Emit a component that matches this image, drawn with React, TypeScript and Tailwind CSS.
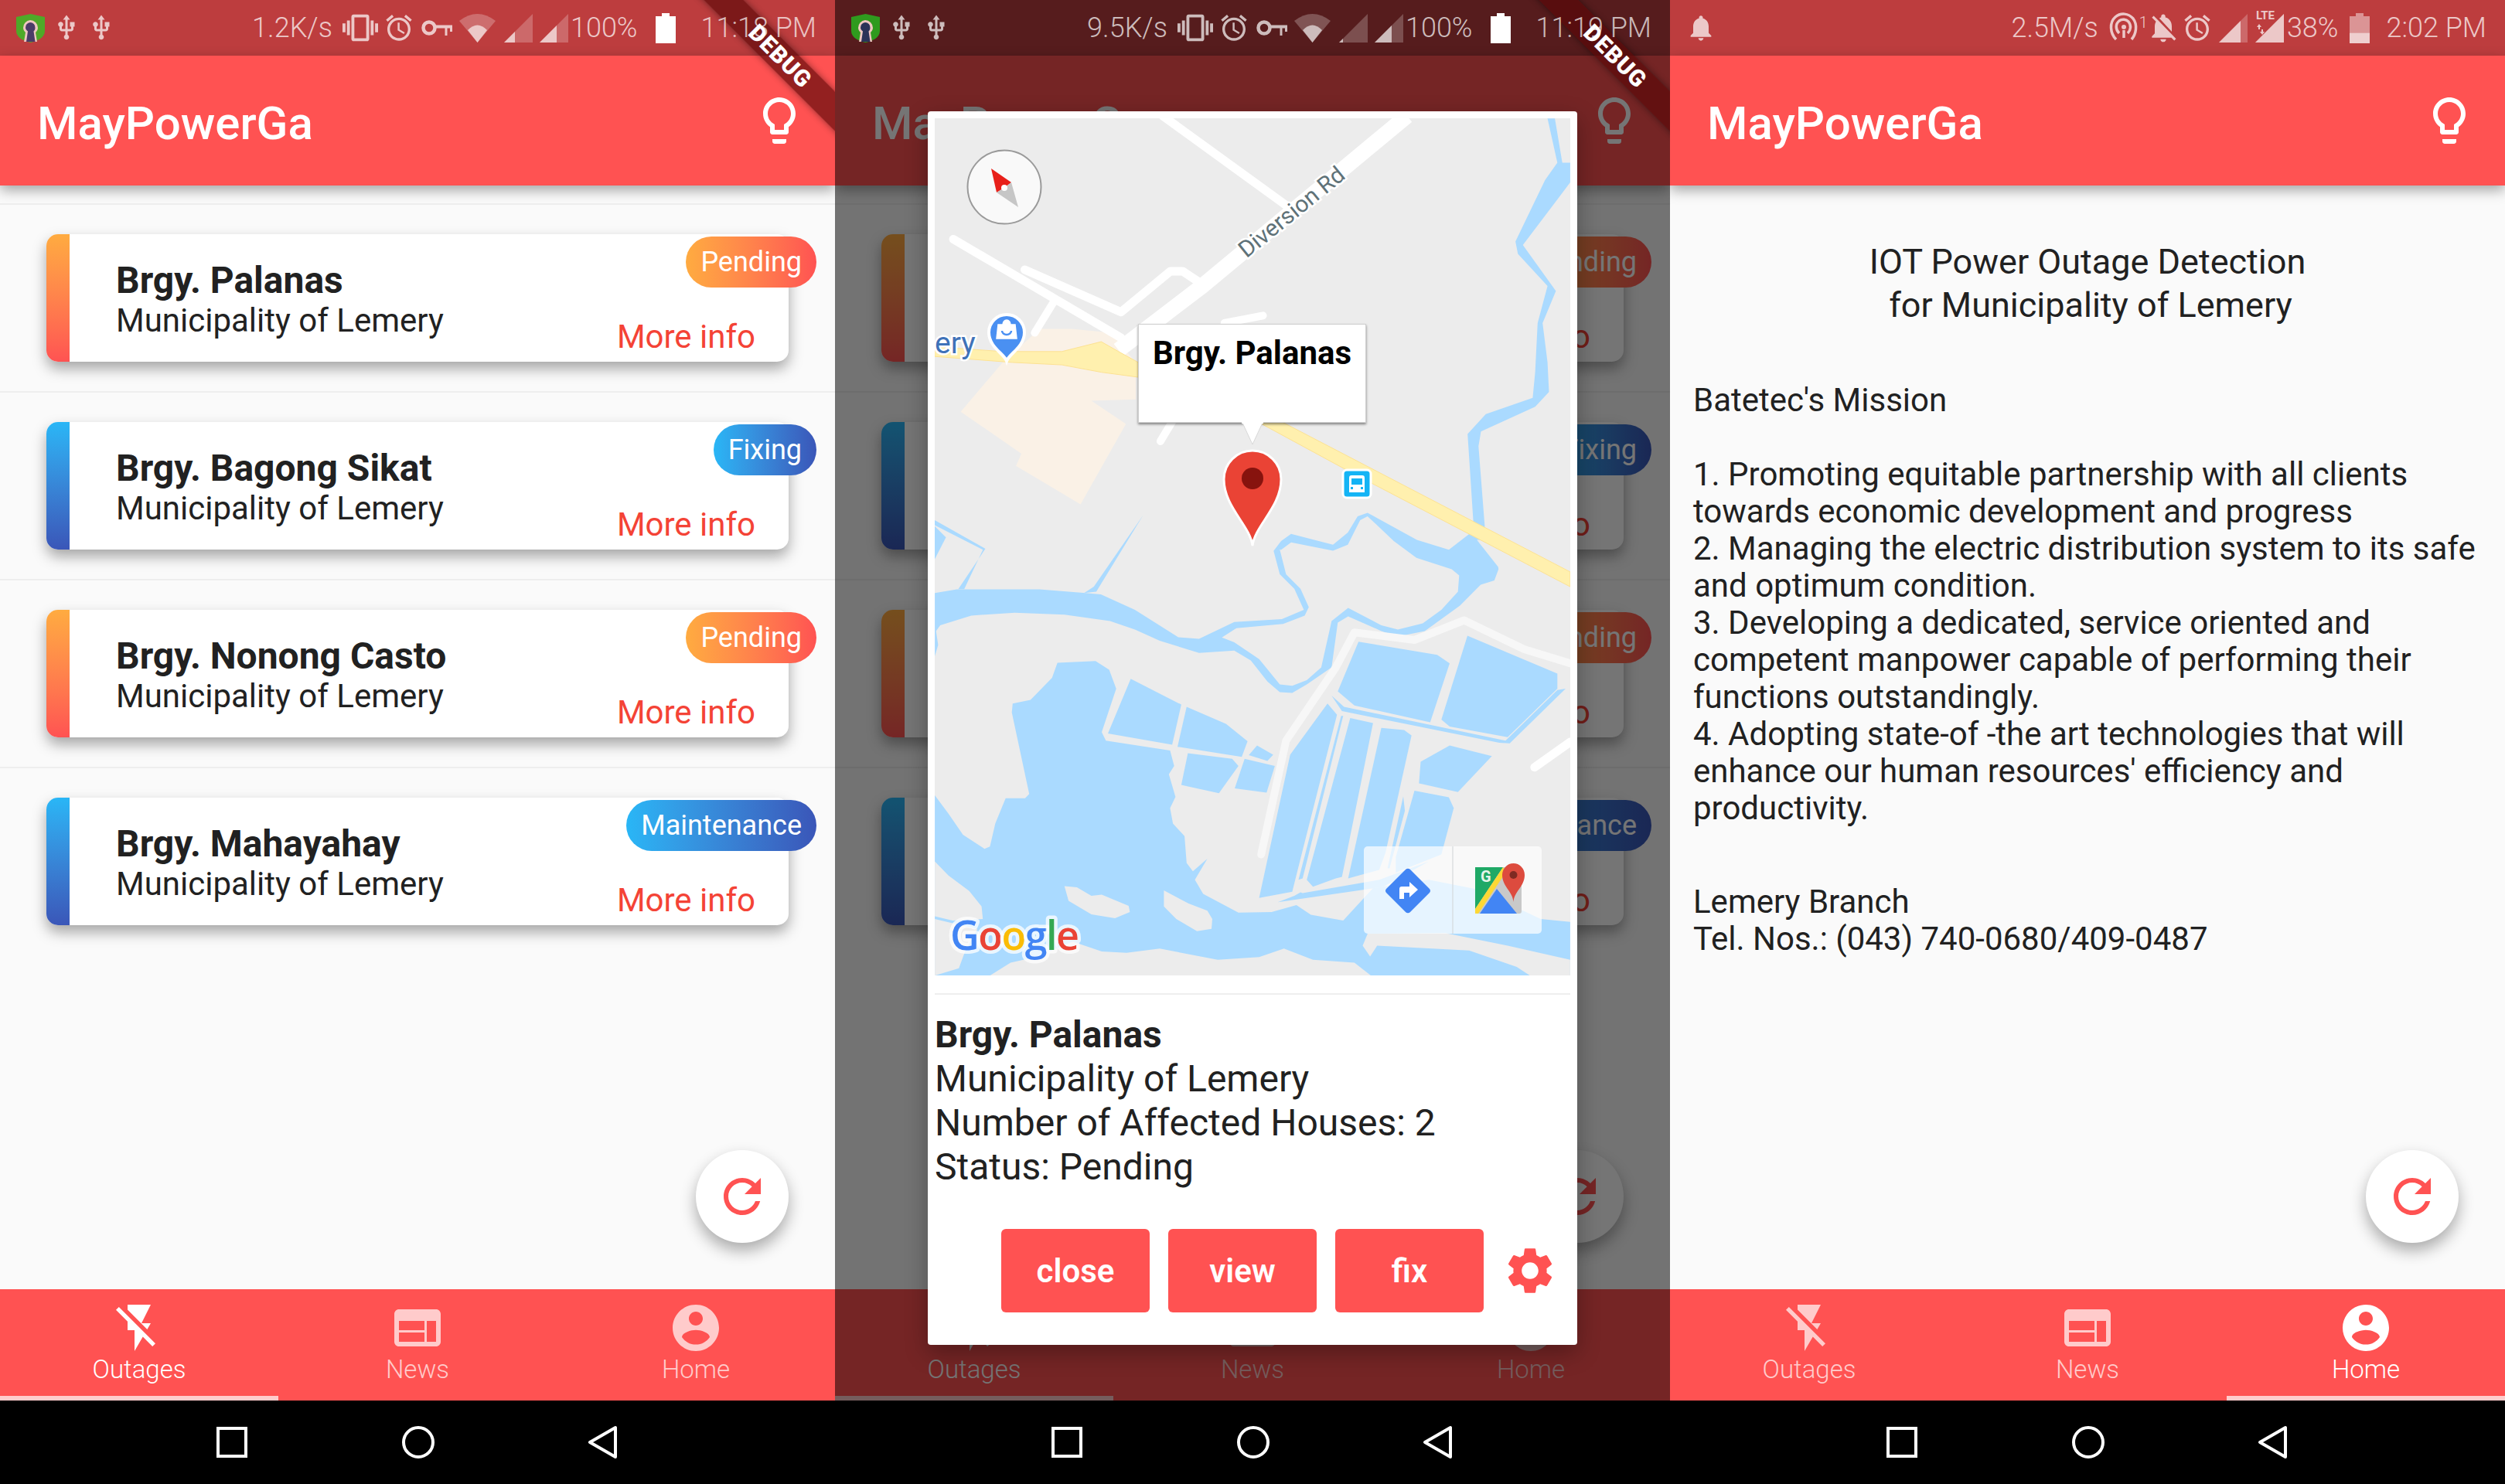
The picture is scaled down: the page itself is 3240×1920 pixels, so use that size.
import React from "react";

const z9 = (s: string) =>
  s.trim().split(/\s+/).map((p) => {
    const [x, y] = p.split(",").map(Number);
    return `${(1080 + x / 1.568).toFixed(1)},${(150 + y / 1.568).toFixed(1)}`;
  }).join(" ");
const z10 = (s: string) =>
  s.trim().split(/\s+/).map((p) => {
    const [x, y] = p.split(",").map(Number);
    return `${(1200 + x / 1.8667).toFixed(1)},${(700 + y / 2.75).toFixed(1)}`;
  }).join(" ");

const P = {
  flashOff: "M3.27 3L2 4.27l5 5V13h3v9l3.58-6.14L17.73 20 19 18.73 3.27 3zM17 10h-4l4-8H7v2.18l8.46 8.46L17 10z",
  web: "M20 4H4c-1.1 0-1.99.9-1.99 2L2 18c0 1.1.9 2 2 2h16c1.1 0 2-.9 2-2V6c0-1.1-.9-2-2-2zm-5 14H4v-4h11v4zm0-5H4V9h11v4zm5 5h-4V9h4v9z",
  account: "M12 2C6.48 2 2 6.48 2 12s4.48 10 10 10 10-4.48 10-10S17.52 2 12 2zm0 3c1.66 0 3 1.34 3 3s-1.34 3-3 3-3-1.34-3-3 1.34-3 3-3zm0 14.2c-2.5 0-4.71-1.28-6-3.22.03-1.99 4-3.08 6-3.08 1.99 0 5.97 1.09 6 3.08-1.29 1.94-3.5 3.22-6 3.22z",
  bulb: "M9 21c0 .55.45 1 1 1h4c.55 0 1-.45 1-1v-1H9v1zm3-19C8.14 2 5 5.14 5 9c0 2.38 1.19 4.47 3 5.74V17c0 .55.45 1 1 1h6c.55 0 1-.45 1-1v-2.26c1.81-1.27 3-3.36 3-5.74 0-3.86-3.14-7-7-7zm2.85 11.1l-.85.6V16h-4v-2.3l-.85-.6C7.8 12.16 7 10.63 7 9c0-2.76 2.24-5 5-5s5 2.24 5 5c0 1.63-.8 3.16-2.15 4.1z",
  refresh: "M17.65 6.35C16.2 4.9 14.21 4 12 4c-4.42 0-7.99 3.58-7.99 8s3.57 8 7.99 8c3.73 0 6.84-2.55 7.73-6h-2.08c-.82 2.33-3.04 4-5.65 4-3.31 0-6-2.69-6-6s2.69-6 6-6c1.66 0 3.14.69 4.22 1.78L13 11h7V4l-2.35 2.35z",
  usb: "M15 7v4h1v2h-3V5h2l-3-4-3 4h2v8H8v-2.07c.7-.37 1.2-1.08 1.2-1.93 0-1.21-.99-2.2-2.2-2.2-1.21 0-2.2.99-2.2 2.2 0 .85.5 1.56 1.2 1.93V13c0 1.11.89 2 2 2h3v3.05c-.71.37-1.2 1.1-1.2 1.95 0 1.22.99 2.2 2.2 2.2 1.21 0 2.2-.98 2.2-2.2 0-.85-.49-1.58-1.2-1.95V15h3c1.11 0 2-.89 2-2v-2h1V7h-4z",
  alarm: "M22 5.72l-4.6-3.86-1.29 1.53 4.6 3.86L22 5.72zM7.88 3.39L6.6 1.86 2 5.71l1.29 1.53 4.59-3.85zM12.5 8H11v6l4.75 2.85.75-1.23-4-2.37V8zM12 4c-4.97 0-9 4.03-9 9s4.03 9 9 9c4.97 0 9-4.03 9-9s-4.03-9-9-9zm0 16c-3.87 0-7-3.13-7-7s3.13-7 7-7 7 3.13 7 7-3.13 7-7 7z",
  vibrate: "M0 15h2V9H0v6zm3 2h2V7H3v10zm19-8v6h2V9h-2zm-3 8h2V7h-2v10zM16.5 3h-9C6.67 3 6 3.67 6 4.5v15c0 .83.67 1.5 1.5 1.5h9c.83 0 1.5-.67 1.5-1.5v-15c0-.83-.67-1.5-1.5-1.5zM16 19H8V5h8v14z",
  bell: "M12 22c1.1 0 2-.9 2-2h-4c0 1.1.89 2 2 2zm6-6v-5c0-3.07-1.64-5.64-4.5-6.32V4c0-.83-.67-1.5-1.5-1.5s-1.5.67-1.5 1.5v.68C7.63 5.36 6 7.92 6 11v5l-2 2v1h16v-1l-2-2z",
  bellOff: "M20 18.69L7.84 6.14 5.27 3.49 4 4.76l2.8 2.8v.01c-.52.99-.8 2.16-.8 3.42v5l-2 2v1h13.73l2 2L21 19.72l-1-1.03zM12 22c1.11 0 2-.89 2-2h-4c0 1.11.89 2 2 2zm6-7.32V11c0-3.08-1.64-5.64-4.5-6.32V4c0-.83-.67-1.5-1.5-1.5s-1.5.67-1.5 1.5v.68c-.15.03-.29.08-.42.12-.1.03-.2.07-.3.11h-.01c-.2.08-.4.17-.59.27-.01 0-.01 0-.02.01L18 14.68z",
  gear: "M19.14 12.94c.04-.3.06-.61.06-.94 0-.32-.02-.64-.07-.94l2.03-1.58c.18-.14.23-.41.12-.61l-1.92-3.32c-.12-.22-.37-.29-.59-.22l-2.39.96c-.5-.38-1.03-.7-1.62-.94l-.36-2.54c-.04-.24-.24-.41-.48-.41h-3.84c-.24 0-.43.17-.47.41l-.36 2.54c-.59.24-1.13.57-1.62.94l-2.39-.96c-.22-.08-.47 0-.59.22L2.74 8.87c-.12.21-.08.47.12.61l2.03 1.58c-.05.3-.09.63-.09.94s.02.64.07.94l-2.03 1.58c-.18.14-.23.41-.12.61l1.92 3.32c.12.22.37.29.59.22l2.39-.96c.5.38 1.03.7 1.62.94l.36 2.54c.05.24.24.41.48.41h3.84c.24 0 .44-.17.47-.41l.36-2.54c.59-.24 1.13-.56 1.62-.94l2.39.96c.22.08.47 0 .59-.22l1.92-3.32c.12-.22.07-.47-.12-.61l-2.01-1.58zM12 15.6c-1.98 0-3.6-1.62-3.6-3.6s1.62-3.6 3.6-3.6 3.6 1.62 3.6 3.6-1.62 3.6-3.6 3.6z",
};

function Mi({ d, size, className = "" }: { d: string; size: number; className?: string }) {
  return (
    <svg width={size} height={size} viewBox="0 0 24 24" fill="currentColor" className={`shrink-0 ${className}`}>
      <path d={d} />
    </svg>
  );
}

function Shield({ dark }: { dark?: boolean }) {
  return (
    <svg width="37" height="37" viewBox="0 0 37 37" className="shrink-0">
      <path d="M18.500 0L37 4V22C37 31 27 35 18.500 37C10 35 0 31 0 22V4Z" fill={dark ? "#2f9a1e" : "#4fa928"} />
      <path d="M18 8a10 10 0 0 1 10 10c0 3-2 5-3 6l2 12H10l2-12c-1-1-3-3-3-6a10 10 0 0 1 9-10z" fill="#eec7c0" />
      <path d="M18 11a6.500 6.500 0 0 1 6.500 7c0 2-1 3.500-2 4.500l2 13.500H13l2-13.500c-1-1-3-2.500-3-4.500a6.500 6.500 0 0 1 6-7z" fill={dark ? "#2b3358" : "#4b3c68"} />
    </svg>
  );
}

function Key() {
  return (
    <svg width="40" height="20" viewBox="0 0 40 20" className="shrink-0" fill="none" stroke="currentColor">
      <circle cx="10" cy="10" r="7.500" strokeWidth="4.500" />
      <path d="M17 8.500H40" strokeWidth="4" />
      <path d="M32 9V20M38.500 9V15" strokeWidth="3" />
    </svg>
  );
}

function Wifi() {
  return (
    <svg width="47" height="37" viewBox="0 0 47 37" className="shrink-0" fill="currentColor">
      <path d="M0 9Q23.500 -9 47 9L23.500 37Z" opacity="0.35" />
      <path d="M11 21Q23.500 8 36 21L23.500 37Z" />
    </svg>
  );
}

function Signal({ w }: { w: number }) {
  return (
    <svg width="37" height="37" viewBox="0 0 37 37" className="shrink-0" fill="currentColor">
      <path d="M37 0V37H0Z" opacity="0.32" />
      <path d={`M0 37L${w} ${37 - w}V37Z`} />
    </svg>
  );
}

function Battery({ level }: { level: number }) {
  return (
    <svg width="26" height="39" viewBox="0 0 26 39" className="shrink-0">
      <path d="M8 0H18V4H26V39H0V4H8Z" fill={level < 1 ? "rgba(255,255,255,0.45)" : "#fff"} />
      {level < 1 && <rect x="0" y={39 - 35 * level} width="26" height={35 * level} fill="rgba(255,255,255,0.55)" />}
    </svg>
  );
}

function Hotspot() {
  return (
    <svg width="40" height="42" viewBox="0 0 40 42" fill="none" stroke="currentColor" strokeWidth="3.500" className="shrink-0">
      <path d="M10 36C2 28 1 14 9 7C16 1 26 2 32 9C38 17 36 29 30 36" />
      <path d="M14 28C9 23 9 16 14 12C18 9 23 10 26 13C30 18 29 24 25 28" />
      <circle cx="20" cy="20" r="3" fill="currentColor" stroke="none" />
      <path d="M20 24V34" />
    </svg>
  );
}

function StatusBar({ screen }: { screen: 1 | 2 | 3 }) {
  const dim = screen === 2;
  const bar = dim
    ? "relative flex h-[72px] shrink-0 items-center bg-[#561c1d] pl-[21px] pr-[24px] text-[#cdbcbc]"
    : "relative flex h-[72px] shrink-0 items-center bg-[#bd3d3e] pl-[21px] pr-[24px] text-[#ecc8c8]";
  if (screen === 3) {
    return (
      <div className={bar}>
        <Mi d={P.bell} size={40} className="-ml-[1px]" />
        <span className="ml-auto text-[36px] font-light leading-none">2.5M/s</span>
        <div className="ml-[13px]"><Hotspot /></div>
        <span className="mb-[14px] text-[20px] font-light leading-none">1</span>
        <Mi d={P.bellOff} size={44} className="-ml-[2px]" />
        <Mi d={P.alarm} size={40} className="ml-[2px]" />
        <div className="ml-[8px]"><Signal w={28} /></div>
        <div className="relative ml-[10px]">
          <Signal w={37} />
          <span className="absolute -top-[5px] left-[1px] text-[15px] font-bold leading-none">LTE</span>
          <svg width="10" height="14" viewBox="0 0 10 14" fill="currentColor" className="absolute left-[2px] top-[13px]">
            <path d="M3 0L6 4H4V7H2V4H0ZM7 14L4 10H6V7H8V10H10Z" />
          </svg>
        </div>
        <span className="ml-[4px] text-[36px] font-light leading-none">38%</span>
        <div className="ml-[15px]"><Battery level={0.38} /></div>
        <span className="ml-[21px] text-[36px] font-light leading-none">2:02 PM</span>
      </div>
    );
  }
  return (
    <div className={bar}>
      <Shield dark={dim} />
      <Mi d={P.usb} size={36} className="ml-[10px]" />
      <Mi d={P.usb} size={36} className="ml-[9px]" />
      <span className="ml-auto text-[36px] font-light leading-none">{dim ? "9.5K/s" : "1.2K/s"}</span>
      <Mi d={P.vibrate} size={46} className="ml-[13px]" />
      <Mi d={P.alarm} size={40} className="ml-[7px]" />
      <div className="ml-[9px]"><Key /></div>
      <div className="ml-[9px]"><Wifi /></div>
      <div className="ml-[11px]"><Signal w={dim ? 5 : 14} /></div>
      <div className="ml-[9px]"><Signal w={22} /></div>
      <span className="ml-[3px] text-[36px] font-light leading-none">100%</span>
      <div className="ml-[24px]"><Battery level={1} /></div>
      <span className="relative z-50 ml-[32px] text-[36px] font-light leading-none text-white/70">{dim ? "11:19 PM" : "11:18 PM"}</span>
    </div>
  );
}

function AppBar() {
  return (
    <header className="relative z-10 flex h-[168px] shrink-0 items-center justify-between bg-[#ff5252] pl-[48px] pr-[36px] text-white shadow-[0_6px_16px_rgba(0,0,0,0.35)]">
      <h1 className="pt-[7px] text-[60px] font-medium leading-none">MayPowerGa</h1>
      <Mi d={P.bulb} size={72} />
    </header>
  );
}

function Debug() {
  return (
    <div className="absolute left-[809px] top-[55px] z-40 flex h-[36px] w-[400px] rotate-45 items-center justify-center bg-[#590606]/65 text-[30px] font-black leading-none tracking-[1px] text-white shadow-[0_0_10px_rgba(0,0,0,0.45)]">
      DEBUG
    </div>
  );
}

const items = [
  { title: "Brgy. Palanas", status: "Pending", warm: true },
  { title: "Brgy. Bagong Sikat", status: "Fixing", warm: false },
  { title: "Brgy. Nonong Casto", status: "Pending", warm: true },
  { title: "Brgy. Mahayahay", status: "Maintenance", warm: false },
];

function OutageList() {
  return (
    <div className="pt-[23px]">
      <div className="h-[2px] bg-[#eeeeee]" />
      {items.map((it) => (
        <div key={it.title} className="border-b-2 border-[#eeeeee] px-[60px] py-[38px] last:border-b-0">
          <div className="relative flex h-[165px] rounded-[15px] bg-white shadow-[0_9px_18px_rgba(0,0,0,0.34)]">
            <div className={`w-[30px] shrink-0 rounded-l-[15px] bg-gradient-to-b ${it.warm ? "from-[#ffab40] to-[#ff5252]" : "from-[#29b6f6] to-[#3a56b8]"}`} />
            <div className="flex flex-col pl-[60px] pt-[32px]">
              <div className="text-[48px] font-bold leading-[56px] text-[#212121]">{it.title}</div>
              <div className="text-[42px] leading-[48px] text-[#212121]">Municipality of Lemery</div>
            </div>
            <div className="absolute bottom-[8px] right-[43px] text-[42px] leading-[48px] text-[#f44336]">More info</div>
            <div className={`absolute -right-[36px] top-[3px] flex h-[66px] items-center rounded-[33px] bg-gradient-to-r px-[19px] text-[36px] leading-none text-white ${it.warm ? "from-[#ffab40] to-[#ff5252]" : "from-[#29b6f6] to-[#3a56b8]"}`}>
              {it.status}
            </div>
          </div>
        </div>
      ))}
    </div>
  );
}

function Fab() {
  return (
    <div className="absolute left-[900px] top-[1248px] flex h-[120px] w-[120px] items-center justify-center rounded-full bg-white text-[#ff5252] shadow-[0_10px_20px_rgba(0,0,0,0.32)]">
      <Mi d={P.refresh} size={72} />
    </div>
  );
}

function Tabs({ active }: { active: number }) {
  const tabs = [
    { label: "Outages", d: P.flashOff },
    { label: "News", d: P.web },
    { label: "Home", d: P.account },
  ];
  return (
    <nav className="flex h-[144px] shrink-0 bg-[#ff5252]">
      {tabs.map((t, i) => (
        <div
          key={t.label}
          className={`flex w-[360px] flex-col items-center border-b-[6px] pt-[14px] ${i === active ? "border-[#ffcbcb] text-white" : "border-transparent text-[#ffcbcb]"}`}
        >
          <Mi d={t.d} size={72} />
          <span className="-mt-[2px] text-[33px] font-light leading-[40px]">{t.label}</span>
        </div>
      ))}
    </nav>
  );
}

function SoftKeys() {
  return (
    <div className="flex h-[108px] shrink-0 items-center justify-center gap-[200px] bg-black">
      <div className="h-[40px] w-[40px] border-[4px] border-white" />
      <div className="h-[42px] w-[42px] rounded-full border-[4px] border-white" />
      <svg width="40" height="44" viewBox="0 0 40 44" fill="none" stroke="#fff" strokeWidth="4" strokeLinejoin="round" className="-ml-[2px]">
        <path d="M36 3V41L3 22Z" />
      </svg>
    </div>
  );
}

function MapArt() {
  const land = "#ececec";
  const water = "#aadaff";
  return (
    <svg width="822" height="1109" viewBox="1209 153 822 1109" className="block">
      <rect x="1209" y="153" width="822" height="1109" fill={land} />
      {/* beige area */}
      <polygon fill="#faf1e6" points={z9("255,600 340,500 415,432 480,432 560,440 610,500 610,575 520,578 590,625 498,788 367,710 378,685")} />
      {/* river */}
      <polygon fill={water} points={z10("17,185 70,172 270,172 375,184 418,190 500,245 605,342 655,348 740,288 855,278 908,245 885,170 850,118 835,35 853,0") + " " + z9("925,848 1010,870 1040,845 1060,812 1080,805 1180,860 1245,880 1290,845 1345,915") + " " + z10("1378,100 1368,140 1335,155 1285,230 1200,320 1135,340 1095,320 1015,268 990,290 975,450 915,510 880,540 850,538 820,500 780,425 740,390 655,398 560,355 500,315 440,285 330,262 210,255 105,265 30,300 20,320 25,370 17,410")} />
      <polygon fill={land} points={z10("850,30 865,118 900,170 920,235 910,265 858,295 745,310 710,343 740,360 800,420 850,510 880,515 915,495 950,450 975,285 1015,238 1095,300 1135,315 1195,293 1240,245 1280,180 1283,122 1265,100 1180,60 1125,0") + " " + z9("1080,812 1065,820 1040,870 1010,882 925,865 905,880 900,880")} />
      {/* thin river on the right */}
      <polygon fill={water} points={z9("1445,5 1465,95 1440,130 1380,255 1385,280 1445,345 1425,420 1420,520 1415,572 1320,605 1283,645 1295,830 1290,860 1320,860 1305,670 1310,640 1420,590 1448,560 1445,500 1435,420 1462,355 1395,262 1491,135 1491,95 1475,95 1460,5")} />
      {/* thin channels on the left */}
      <polygon fill={water} points={z9("202,820 305,878 250,960 262,960 300,880 202,830")} />
      <polygon fill={water} points={z9("202,832 225,855 202,900")} />
      <polygon fill={water} points={z9("625,810 525,955 505,968 530,965")} />
      {/* lake and sea */}
      <polygon fill={water} points={z10("313,433 405,427 438,458 455,525 420,680 430,710 585,745 595,800 582,830 598,910 585,950 592,1005 620,1050 625,1145 640,1175 675,1130 645,1205 665,1255 750,1322 830,1320 890,1295 925,1330 1003,1350 1075,1235 1210,1205 1330,1240 1480,1345 1551,1355 1551,1546 17,1546 17,905 50,970 85,1045 137,1095 150,1087 163,1005 188,915 235,915 245,900 203,610 205,578 248,565 300,487")} />
      {/* land over the sea */}
      <polygon fill={land} points={z10("150,1546 200,1500 260,1480 350,1425 420,1460 480,1465 560,1450 700,1490 800,1480 860,1450 930,1490 1030,1500 1070,1546")} />
      <polygon fill={land} points={z10("1050,1440 1062,1397 1250,1395 1400,1440 1551,1490 1551,1546 1454,1546 1422,1515 1307,1457 1085,1440 1068,1478")} />
      <polygon fill={land} points={z10("17,1140 50,1190 100,1245 130,1300 133,1345 60,1350 17,1335")} />
      <polygon fill={land} points={z10("17,1345 60,1360 120,1380 90,1460 75,1520 17,1546")} />
      <polygon fill={land} points={z10("330,1228 360,1232 395,1262 420,1258 485,1298 488,1320 452,1342 395,1328 340,1280")} />
      <polygon fill={land} points={z10("570,1243 630,1290 675,1315 687,1345 685,1380 650,1388 600,1345 570,1300")} />
      {/* ponds */}
      {[
        "435,685 490,490 612,582 590,725",
        "625,590 720,650 772,712 758,768 603,732",
        "795,727 834,760 820,782 775,762",
        "628,755 735,775 750,800 703,897 612,868",
        "765,775 838,800 818,895 741,880",
        "1040,358 1230,405 1260,435 1213,645 1030,585 990,535",
        "1303,337 1520,472 1520,525 1400,698 1260,660 1240,635",
        "965,578 988,618 900,1130 880,1248 800,1270 875,760",
        "1020,630 1075,648 1000,1195 985,1200 930,1230 915,1205",
        "1095,665 1150,672 1168,692 1105,1110 1090,1170 1015,1200",
        "1260,727 1362,765 1280,893 1186,862 1190,785",
        "1175,888 1258,912 1270,950 1240,1115 1130,1180 1130,1125",
        "975,550 1005,590 1395,710 1520,530 1540,525 1405,720 1380,718 1000,605",
        "998,622 1003,622 905,1200 895,1205",
        "1148,908 1152,960 1115,1165 1110,1165",
        "845,1285 885,1262 900,1250 905,1253 1090,1205 1210,1140 1100,1230",
      ].map((p) => (
        <polygon key={p} fill={water} points={z10(p)} />
      ))}
      {/* pale dyke road */}
      <polyline fill="none" stroke="#f7f7f7" strokeWidth="10" strokeLinecap="round" strokeLinejoin="round" points={z10("805,1115 865,710 985,450 1030,325 1175,352 1295,282 1440,385 1551,435")} />
      {/* white roads */}
      <g fill="none" stroke="#fff" strokeLinecap="round" strokeLinejoin="round">
        <polyline strokeWidth="11" points={z9("665,0 920,185")} />
        <polyline strokeWidth="20" strokeLinecap="butt" points={z9("1160,0 745,345 575,475")} />
        <polyline strokeWidth="11" points={z9("240,250 580,450")} />
        <polyline strokeWidth="11" points={z9("385,312 580,398 680,315 705,315 735,335")} />
        <polyline strokeWidth="10" points={z9("445,375 405,440")} />
        <polyline strokeWidth="10" points={z9("660,660 690,610")} />
        <polyline strokeWidth="10" points={z9("790,420 868,405")} />
        <polyline strokeWidth="11" points={z10("1465,805 1551,715")} />
      </g>
      {/* yellow roads */}
      <polygon fill="#fff0ae" stroke="#fde293" strokeWidth="1" points={z9("202,468 340,478 460,478 540,458 575,478 615,500 615,530 540,520 460,505 360,500 202,488")} />
      <polygon fill="#fff0ae" stroke="#fde293" strokeWidth="1" points={z9("860,622 905,620 1491,925 1491,955 1050,725")} />
      {/* road label */}
      <text x="0" y="0" transform="translate(1672 276) rotate(-39)" textAnchor="middle" fontFamily="Roboto" fontSize="30" fill="#5f7278" stroke="#fff" strokeWidth="5" paintOrder="stroke" dominantBaseline="middle">Diversion Rd</text>
      {/* place label + blue marker */}
      <text x="1209" y="457" fontFamily="Roboto" fontSize="39" fill="#3f72b8" stroke="#fff" strokeWidth="5" paintOrder="stroke">ery</text>
      <path d="M1302 467c-3-9-23-18-23-37a23 23 0 0 1 46 0c0 19-20 28-23 37z" fill="#4a90f2" stroke="#fff" strokeWidth="4" />
      <path d="M1291 420h22l2 18h-26z M1297 420a5 6 0 0 1 10 0" fill="#fff" stroke="#fff" strokeWidth="1.500" />
      <path d="M1296 428a6 5 0 0 0 12 0" fill="none" stroke="#4a90f2" strokeWidth="2.500" />
      {/* bus */}
      <rect x="1737" y="608" width="36" height="36" rx="5" fill="#14b4f5" stroke="#fff" strokeWidth="3" />
      <path d="M1748 615h14a3 3 0 0 1 3 3v19h-20v-19a3 3 0 0 1 3-3zM1748 619v8h14v-8z" fill="#fff" fillRule="evenodd" />
      <rect x="1747" y="630" width="3" height="3" fill="#14b4f5" />
      <rect x="1760" y="630" width="3" height="3" fill="#14b4f5" />
      {/* red pin */}
      <path d="M1620 706c-3-26-37-50-37-86a37 37 0 0 1 74 0c0 36-34 60-37 86z" fill="#ea4335" stroke="#fff" strokeWidth="3" />
      <circle cx="1620" cy="619" r="14" fill="#87130e" />
      {/* compass */}
      <circle cx="1299" cy="242" r="47.500" fill="#f9f9f9" stroke="#9a9a9a" strokeWidth="2" />
      <polygon points="1282,218 1308,236 1299,243 1289,249" fill="#e8201a" />
      <polygon points="1299,243 1308,236 1317,268 1289,249" fill="#c6c6c6" />
      <circle cx="1299" cy="243" r="4" fill="#fff" />
      {/* google */}
      <text x="1229" y="1229" fontFamily="Open Sans" fontWeight="600" fontSize="52" letterSpacing="-1.500" stroke="#fff" strokeOpacity="0.75" strokeWidth="9" paintOrder="stroke" strokeLinejoin="round">
        <tspan fill="#4285f4">G</tspan>
        <tspan fill="#ea4335">o</tspan>
        <tspan fill="#fbbc05">o</tspan>
        <tspan fill="#4285f4">g</tspan>
        <tspan fill="#34a853">l</tspan>
        <tspan fill="#ea4335">e</tspan>
      </text>
      {/* map toolbar */}
      <rect x="1764" y="1095" width="230" height="113" rx="5" fill="#fff" fillOpacity="0.7" />
      <rect x="1878.500" y="1095" width="1" height="113" fill="#cfd3d6" />
      <path d="M1818 1125a4 4 0 0 1 6 0l25 25a4 4 0 0 1 0 5l-25 25a4 4 0 0 1-6 0l-25-25a4 4 0 0 1 0-5z" fill="#4285f4" />
      <path d="M1810 1163v-13a3 3 0 0 1 3-3h10v-6l11 10-11 10v-6h-7v8z" fill="#fff" />
      <rect x="1908" y="1122" width="60" height="60" rx="3" fill="#c9c9c9" />
      <polygon points="1908,1122 1944,1122 1908,1176" fill="#1fa966" />
      <polygon points="1908,1176 1944,1122 1948,1128 1912,1182 1908,1182" fill="#fdd835" />
      <polygon points="1914,1182 1936,1150 1962,1182" fill="#4285f4" />
      <text x="1915" y="1141" fontFamily="Roboto" fontWeight="700" fontSize="20" fill="#e6f4ea">G</text>
      <path d="M1957.500 1167c-1-14-14.500-20-14.500-35a14.500 15 0 0 1 29 0c0 15-13.500 21-14.500 35z" fill="#dd4b3e" />
      <circle cx="1957.500" cy="1132" r="5" fill="#7f2a22" />
    </svg>
  );
}

function Dialog() {
  return (
    <section className="absolute left-[120px] top-[144px] z-30 flex h-[1596px] w-[840px] flex-col rounded-[4px] bg-white px-[9px] pt-[9px] shadow-[0_10px_30px_rgba(0,0,0,0.3)]">
      <div className="relative">
        <MapArt />
        <div className="absolute left-[263px] top-[266px] h-[128px] w-[295px] border border-[#cfcfcf] bg-white pl-[18px] pt-[11px] shadow-[0_2px_3px_rgba(0,0,0,0.45)]">
          <span className="text-[42px] font-bold leading-[52px] text-black">Brgy. Palanas</span>
          <svg width="30" height="30" viewBox="0 0 30 30" className="absolute left-[132px] top-[126px]">
            <polygon points="2,1 28,1 15,29" fill="#fff" stroke="#d8d8d8" strokeWidth="1" />
            <rect x="1" y="0" width="28" height="2" fill="#fff" />
          </svg>
        </div>
      </div>
      <div className="mt-[23px] h-[2px] bg-[#eeeeee]" />
      <div className="pt-[23px] text-[48px] leading-[57px] text-[#212121]">
        <div className="font-bold">Brgy. Palanas</div>
        <div>Municipality of Lemery</div>
        <div>Number of Affected Houses: 2</div>
        <div>Status: Pending</div>
      </div>
      <div className="mt-[52px] flex items-center justify-end gap-[24px] pr-[19px]">
        {["close", "view", "fix"].map((b) => (
          <div key={b} className="flex h-[108px] w-[192px] items-center justify-center rounded-[6px] bg-[#ff5252] text-[42px] font-semibold text-white">
            {b}
          </div>
        ))}
        <Mi d={P.gear} size={72} className="-mr-[3px] text-[#ff5252]" />
      </div>
    </section>
  );
}

const mission = [
  "1. Promoting equitable partnership with all clients",
  "towards economic development and progress",
  "2. Managing the electric distribution system to its safe",
  "and optimum condition.",
  "3. Developing a dedicated, service oriented and",
  "competent manpower capable of performing their",
  "functions outstandingly.",
  "4. Adopting state-of -the art technologies that will",
  "enhance our human resources' efficiency and",
  "productivity.",
];

function HomeView() {
  return (
    <div className="px-[30px] pt-[71px] text-[#212121]">
      <div className="text-center text-[45px] leading-[56px]">
        <div>IOT Power Outage Detection</div>
        <div className="pl-[8px]">for Municipality of Lemery</div>
      </div>
      <div className="mt-[71px] text-[42px] leading-[48px]">Batetec's Mission</div>
      <div className="mt-[48px] whitespace-nowrap text-[42px] leading-[48px]">
        {mission.map((l) => (
          <div key={l}>{l}</div>
        ))}
      </div>
      <div className="mt-[73px] text-[42px] leading-[48px]">
        <div>Lemery Branch</div>
        <div>Tel. Nos.: (043) 740-0680/409-0487</div>
      </div>
    </div>
  );
}

function Screen({ n }: { n: 1 | 2 | 3 }) {
  return (
    <div className="relative flex h-[1920px] w-[1080px] shrink-0 flex-col overflow-hidden bg-[#fafafa]">
      <StatusBar screen={n} />
      <AppBar />
      <main className="relative min-h-0 flex-1">
        {n === 3 ? <HomeView /> : <OutageList />}
        <Fab />
      </main>
      <Tabs active={n === 3 ? 2 : 0} />
      <SoftKeys />
      {n !== 3 && <Debug />}
      {n === 2 && <div className="absolute inset-x-0 bottom-[108px] top-[72px] z-20 bg-black/54" />}
      {n === 2 && <Dialog />}
    </div>
  );
}

export default function App() {
  return (
    <div className="flex h-[1920px] w-[3240px] font-['Roboto',sans-serif]">
      <Screen n={1} />
      <Screen n={2} />
      <Screen n={3} />
    </div>
  );
}
